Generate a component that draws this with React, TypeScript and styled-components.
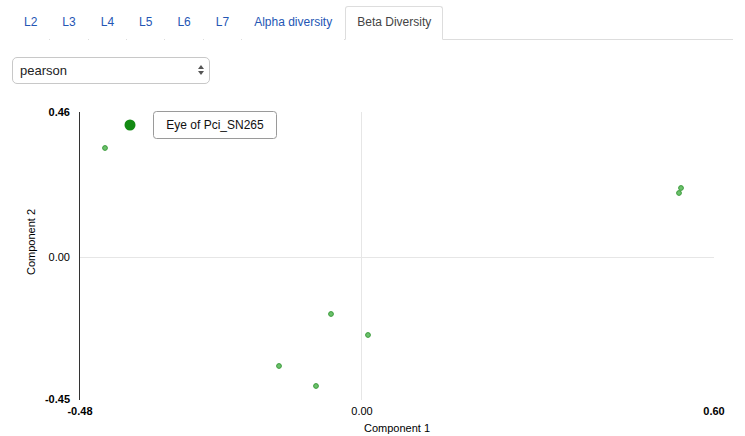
import React from "react";
import styled, { createGlobalStyle } from "styled-components";

const Global = createGlobalStyle`
  html, body { margin: 0; padding: 0; background: #fff; }
  body { font-family: "Liberation Sans", Arial, sans-serif; color: #333; }
`;

const Page = styled.div`
  padding: 6px 12px 0 12px;
  display: flex;
  flex-direction: column;
`;

const Tabs = styled.ul`
  list-style: none;
  margin: 0;
  padding: 0;
  display: flex;
  border-bottom: 1px solid #ddd;
`;

const Tab = styled.li<{ $active?: boolean }>`
  margin-right: 1px;
  margin-bottom: -1px;
  height: 34px;
  padding: 0 11px 2px;
  display: flex;
  align-items: center;
  font-size: 12px;
  box-sizing: border-box;
  border: 1px solid ${(p) => (p.$active ? "#ddd" : "transparent")};
  border-bottom-color: ${(p) => (p.$active ? "#fff" : "transparent")};
  border-radius: 3px 3px 0 0;
  background: #fff;
  color: ${(p) => (p.$active ? "#444" : "#2456b4")};
`;

const SelectWrap = styled.div`
  position: relative;
  margin-top: 17px;
  width: 198px;
  height: 27px;
`;

const Select = styled.select`
  appearance: none;
  -webkit-appearance: none;
  width: 100%;
  height: 100%;
  border: 1px solid #c8c8c8;
  border-radius: 5px;
  background: #fff;
  font-family: "Liberation Sans", Arial, sans-serif;
  font-size: 13px;
  color: #222;
  padding: 0 0 0 7px;
  outline: none;
`;

const Arrows = styled.svg`
  position: absolute;
  right: 6px;
  top: 8px;
  pointer-events: none;
`;

const Chart = styled.svg`
  display: block;
  margin-top: 11px;
`;

const points: [number, number][] = [
  [105, 148],
  [331, 314],
  [368, 335],
  [279, 366],
  [316, 386],
  [681, 188],
  [679, 193],
];

const tabs = ["L2", "L3", "L4", "L5", "L6", "L7", "Alpha diversity", "Beta Diversity"];

export default function App() {
  return (
    <>
      <Global />
      <Page>
        <Tabs>
          {tabs.map((t) => (
            <Tab key={t} $active={t === "Beta Diversity"}>
              {t}
            </Tab>
          ))}
        </Tabs>
        <SelectWrap>
          <Select defaultValue="pearson">
            <option value="pearson">pearson</option>
            <option value="spearman">spearman</option>
          </Select>
          <Arrows width="6" height="10" viewBox="0 0 6 10">
            <path d="M0 4 L3 0 L6 4 Z" fill="#555" />
            <path d="M0 6 L3 10 L6 6 Z" fill="#555" />
          </Arrows>
        </SelectWrap>
        <Chart width="721" height="341" viewBox="12 95 721 341">
          <line x1="80" y1="257.5" x2="714" y2="257.5" stroke="#e6e6e6" strokeWidth="1" />
          <line x1="361.5" y1="112" x2="361.5" y2="400" stroke="#e6e6e6" strokeWidth="1" />
          <line x1="79.5" y1="112" x2="79.5" y2="400" stroke="#333" strokeWidth="1" />
          <g fontFamily="Liberation Sans, Arial, sans-serif" fontSize="11" fill="#000">
            <text x="70" y="116" textAnchor="end" fontWeight="bold">0.46</text>
            <text x="70" y="261" textAnchor="end">0.00</text>
            <text x="70" y="403" textAnchor="end" fontWeight="bold">-0.45</text>
            <text x="80" y="415" textAnchor="middle" fontWeight="bold">-0.48</text>
            <text x="362" y="415" textAnchor="middle">0.00</text>
            <text x="714" y="415" textAnchor="middle" fontWeight="bold">0.60</text>
            <text x="397" y="432" textAnchor="middle">Component 1</text>
            <text transform="translate(35 242) rotate(-90)" textAnchor="middle">Component 2</text>
          </g>
          {points.map(([x, y], i) => (
            <circle key={i} cx={x} cy={y} r="2.4" fill="#6cc16c" stroke="#3b9b3b" strokeWidth="1" />
          ))}
          <circle cx="130" cy="125" r="5.5" fill="#138a13" />
          <rect x="153.5" y="111.5" width="123" height="27" rx="3" fill="#fff" stroke="#9a9a9a" />
          <text x="215" y="129" textAnchor="middle" fontFamily="Liberation Sans, Arial, sans-serif" fontSize="12" fill="#111">
            Eye of Pci_SN265
          </text>
        </Chart>
      </Page>
    </>
  );
}
